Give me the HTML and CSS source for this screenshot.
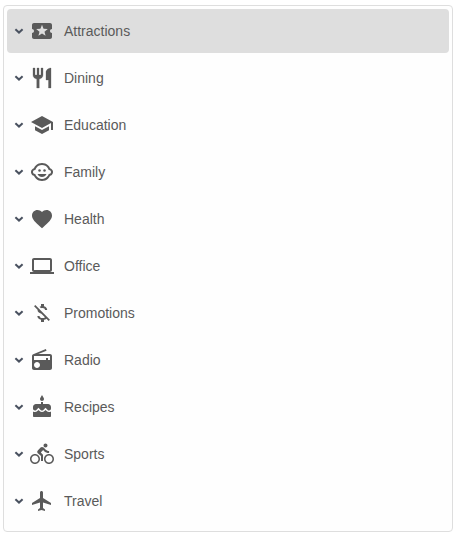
FILE: index.html
```html
<!DOCTYPE html>
<html lang="en">
<head>
    <meta charset="UTF-8">
    <meta name="viewport" content="width=device-width, initial-scale=1.0">
    <title>Categories</title>
    <link rel="stylesheet" href="styles.css">
</head>
<body>
    <svg class="sprite">
        <symbol id="chevron" viewBox="0 0 10 10">
            <path d="M1.4 3.3L5 6.6l3.6-3.3" fill="none" stroke="currentColor" stroke-width="2"/>
        </symbol>
    </svg>

    <ul class="tree">
        <li class="tree-item selected">
            <svg class="chevron"><use href="#chevron"/></svg>
            <svg class="icon" viewBox="0 0 24 24"><path d="M20 12c0-1.1.9-2 2-2V6c0-1.1-.9-2-2-2H4c-1.1 0-1.99.9-1.99 2v4c1.1 0 1.99.9 1.99 2s-.89 2-2 2v4c0 1.1.9 2 2 2h16c1.1 0 2-.9 2-2v-4c-1.1 0-2-.9-2-2zm-4.42 4.8L12 14.5l-3.58 2.3 1.08-4.12-3.29-2.69 4.24-.25L12 5.8l1.54 3.95 4.24.25-3.29 2.69 1.09 4.11z"/></svg>
            <span class="label">Attractions</span>
        </li>
        <li class="tree-item">
            <svg class="chevron"><use href="#chevron"/></svg>
            <svg class="icon" viewBox="0 0 24 24"><path stroke="#5a5a5a" stroke-width=".3" d="M11 9H9V2H7v7H5V2H3v7c0 2.12 1.66 3.84 3.75 3.97V22h2.5v-9.03C11.34 12.84 13 11.12 13 9V2h-2v7zm5-3v8h2.5v8H21V2c-2.76 0-5 2.24-5 4z"/></svg>
            <span class="label">Dining</span>
        </li>
        <li class="tree-item">
            <svg class="chevron"><use href="#chevron"/></svg>
            <svg class="icon" viewBox="0 0 24 24"><path d="M5 13.18v4L12 21l7-3.82v-4L12 17l-7-3.82zM12 3L1 9l11 6 9-4.91V17h2V9L12 3z"/></svg>
            <span class="label">Education</span>
        </li>
        <li class="tree-item">
            <svg class="chevron"><use href="#chevron"/></svg>
            <svg class="icon" viewBox="0 0 24 24"><circle cx="14.5" cy="10.5" r="1.25"/><circle cx="9.5" cy="10.5" r="1.25"/><path d="M22.94 12.66c.04-.21.06-.43.06-.66s-.02-.45-.06-.66c-.25-1.51-1.36-2.74-2.81-3.17-.53-1.12-1.28-2.1-2.19-2.91C16.36 3.85 14.28 3 12 3s-4.36.85-5.94 2.26c-.92.81-1.67 1.8-2.19 2.91-1.45.43-2.56 1.65-2.81 3.17-.04.21-.06.43-.06.66s.02.45.06.66c.25 1.51 1.36 2.74 2.81 3.17.52 1.11 1.27 2.09 2.17 2.89C7.62 20.14 9.71 21 12 21s4.38-.86 5.97-2.28c.9-.8 1.65-1.79 2.17-2.89 1.44-.43 2.55-1.65 2.8-3.17zM19 14c-.1 0-.19-.02-.29-.03-.2.67-.49 1.29-.86 1.86C16.6 17.74 14.45 19 12 19s-4.6-1.26-5.85-3.17c-.37-.57-.66-1.19-.86-1.86-.1.01-.19.03-.29.03-1.1 0-2-.9-2-2s.9-2 2-2c.1 0 .19.02.29.03.2-.67.49-1.29.86-1.86C7.4 6.26 9.55 5 12 5s4.6 1.26 5.85 3.17c.37.57.66 1.19.86 1.86.1-.01.19-.03.29-.03 1.1 0 2 .9 2 2s-.9 2-2 2zM7.5 14c.76 1.77 2.49 3 4.5 3s3.74-1.23 4.5-3h-9z"/></svg>
            <span class="label">Family</span>
        </li>
        <li class="tree-item">
            <svg class="chevron"><use href="#chevron"/></svg>
            <svg class="icon" viewBox="0 0 24 24"><path d="M12 21.35l-1.45-1.32C5.4 15.36 2 12.28 2 8.5 2 5.42 4.42 3 7.5 3c1.74 0 3.41.81 4.5 2.09C13.09 3.81 14.76 3 16.5 3 19.58 3 22 5.42 22 8.5c0 3.78-3.4 6.86-8.55 11.54L12 21.35z"/></svg>
            <span class="label">Health</span>
        </li>
        <li class="tree-item">
            <svg class="chevron"><use href="#chevron"/></svg>
            <svg class="icon" viewBox="0 0 24 24"><path d="M20 18c1.1 0 1.99-.9 1.99-2L22 6c0-1.1-.9-2-2-2H4c-1.1 0-2 .9-2 2v10c0 1.1.9 2 2 2H0v2h24v-2h-4zM4 6h16v10H4V6z"/></svg>
            <span class="label">Office</span>
        </li>
        <li class="tree-item">
            <svg class="chevron"><use href="#chevron"/></svg>
            <svg class="icon" viewBox="0 0 24 24"><path d="M12.5 6.9c1.78 0 2.44.85 2.5 2.1h2.21c-.07-1.72-1.12-3.3-3.21-3.81V3h-3v2.16c-.53.12-1.03.3-1.48.54l1.47 1.47c.41-.17.91-.27 1.51-.27zM5.33 4.06L4.06 5.33 7.5 8.77c0 2.08 1.56 3.21 3.91 3.91l3.51 3.51c-.34.48-1.05.91-2.42.91-2.06 0-2.87-.92-2.98-2.1h-2.2c.12 2.19 1.76 3.42 3.68 3.83V21h3v-2.15c.96-.18 1.82-.55 2.45-1.12l2.22 2.22 1.27-1.27L5.33 4.06z"/></svg>
            <span class="label">Promotions</span>
        </li>
        <li class="tree-item">
            <svg class="chevron"><use href="#chevron"/></svg>
            <svg class="icon" viewBox="0 0 24 24"><path d="M3.24 6.15C2.51 6.43 2 7.17 2 8v12c0 1.1.89 2 2 2h16c1.11 0 2-.9 2-2V8c0-1.11-.89-2-2-2H8.3l8.26-3.34L15.88 1 3.24 6.15zM7 20c-1.66 0-3-1.34-3-3s1.34-3 3-3 3 1.34 3 3-1.34 3-3 3zm13-8h-2v-2h-2v2H4V8h16v4z"/></svg>
            <span class="label">Radio</span>
        </li>
        <li class="tree-item">
            <svg class="chevron"><use href="#chevron"/></svg>
            <svg class="icon" viewBox="0 0 24 24"><path d="M12 6c1.11 0 2-.9 2-2 0-.38-.1-.73-.29-1.03L12 0l-1.71 2.97c-.19.3-.29.65-.29 1.03 0 1.1.9 2 2 2zm4.6 9.99l-1.07-1.07-1.08 1.07c-1.3 1.3-3.58 1.31-4.89 0l-1.07-1.07-1.09 1.07C6.75 16.64 5.88 17 4.96 17c-.73 0-1.4-.23-1.96-.61V21c0 .55.45 1 1 1h16c.55 0 1-.45 1-1v-4.61c-.56.38-1.23.61-1.96.61-.92 0-1.79-.36-2.44-1.01zM18 9h-5V7h-2v2H6c-1.66 0-3 1.34-3 3v1.54c0 1.08.88 1.96 1.96 1.96.52 0 1.02-.2 1.38-.57l2.14-2.13 2.13 2.13c.74.74 2.03.74 2.77 0l2.14-2.13 2.13 2.13c.37.37.86.57 1.38.57 1.08 0 1.96-.88 1.96-1.96V12C21 10.34 19.66 9 18 9z"/></svg>
            <span class="label">Recipes</span>
        </li>
        <li class="tree-item">
            <svg class="chevron"><use href="#chevron"/></svg>
            <svg class="icon" viewBox="0 0 24 24"><path d="M15.5 5.5c1.1 0 2-.9 2-2s-.9-2-2-2-2 .9-2 2 .9 2 2 2zM5 12c-2.8 0-5 2.2-5 5s2.2 5 5 5 5-2.2 5-5-2.2-5-5-5zm0 8.5c-1.9 0-3.5-1.6-3.5-3.5s1.6-3.5 3.5-3.5 3.5 1.6 3.5 3.5-1.6 3.5-3.5 3.5zm5.8-10l2.4-2.4.8.8c1.3 1.3 3 2.1 5.1 2.1V9c-1.5 0-2.7-.6-3.6-1.5l-1.9-1.9c-.5-.4-1-.6-1.6-.6s-1.1.2-1.4.6L7.8 8.4c-.4.4-.6.9-.6 1.4 0 .6.2 1.1.6 1.4L11 14v5h2v-6.2l-2.2-2.3zM19 12c-2.8 0-5 2.2-5 5s2.2 5 5 5 5-2.2 5-5-2.2-5-5-5zm0 8.5c-1.9 0-3.5-1.6-3.5-3.5s1.6-3.5 3.5-3.5 3.5 1.6 3.5 3.5-1.6 3.5-3.5 3.5z"/></svg>
            <span class="label">Sports</span>
        </li>
        <li class="tree-item">
            <svg class="chevron"><use href="#chevron"/></svg>
            <svg class="icon" viewBox="0 0 24 24"><path d="M21 16v-2l-8-5V3.5c0-.83-.67-1.5-1.5-1.5S10 2.67 10 3.5V9l-8 5v2l8-2.5V19l-2 1.5V22l3.5-1 3.5 1v-1.5L13 19v-5.5l8 2.5z"/></svg>
            <span class="label">Travel</span>
        </li>
    </ul>
</body>
</html>
```

FILE: styles.css
```css
* {
    margin: 0;
    padding: 0;
    box-sizing: border-box;
}

body {
    font-family: Arial, "Liberation Sans", sans-serif;
    font-size: 14px;
    color: #5a5a5a;
    background: #fff;
    padding: 5px 7px 6px 3px;
}

.sprite {
    display: none;
}

.tree {
    display: flex;
    flex-direction: column;
    gap: 3px;
    height: 527px;
    padding: 3px;
    list-style: none;
    background: #fefefe;
    border: 1px solid #dedede;
    border-radius: 4px;
}

.tree-item {
    display: flex;
    align-items: center;
    height: 44px;
    padding-left: 7px;
    border-radius: 4px;
}

.tree-item.selected {
    background: #dedede;
}

.chevron {
    width: 10px;
    height: 10px;
    margin-right: 6px;
    color: #4a5260;
}

.icon {
    width: 24px;
    height: 24px;
    margin-right: 10px;
    fill: #5a5a5a;
}

.label {
    line-height: 20px;
}
```
